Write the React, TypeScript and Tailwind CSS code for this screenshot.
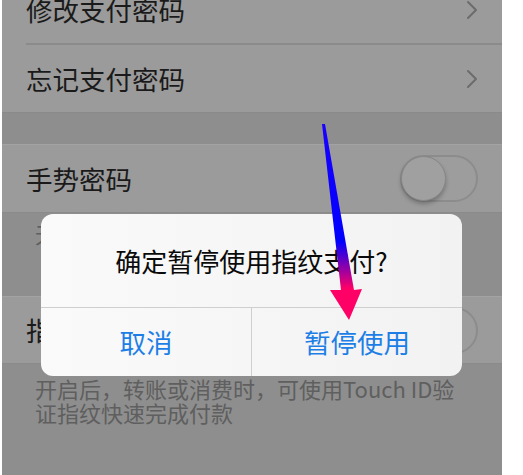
import React from "react";

function Chevron() {
  return (
    <svg width="12" height="20" viewBox="0 0 12 20" className="shrink-0">
      <path d="M2 2 L10 10 L2 18" fill="none" stroke="#6c6c6c" strokeWidth="2" strokeLinecap="round" strokeLinejoin="round" />
    </svg>
  );
}

function Toggle() {
  return (
    <div className="relative w-[78px] h-[47px] rounded-full border-2 border-[#8c8c8c] bg-[#9d9d9d] shrink-0">
      <div className="absolute left-[-1px] top-[-1px] w-[45px] h-[45px] rounded-full bg-[#a0a0a0] border border-[#878787] shadow-[0_3px_4px_rgba(0,0,0,0.25)]" />
    </div>
  );
}

export default function App() {
  return (
    <div className="relative w-[523px] h-[475px] overflow-hidden bg-white font-['Noto_Sans_CJK_SC','Noto_Sans',sans-serif]">
      <div className="ml-[2px] w-[500px] h-[475px] bg-[#8e8e8e] flex flex-col">
        {/* password group */}
        <div className="-mt-[24px] bg-[#9b9b9b] border-b border-[#8a8a8a]">
          <div className="h-[67px] pl-[24px] pr-[24px] flex items-center justify-between">
            <span className="text-[26.5px] text-[#1a1a1a]">修改支付密码</span>
            <Chevron />
          </div>
          <div className="ml-[24px] h-[2px] bg-[#8b8b8b]" />
          <div className="h-[67px] pl-[24px] pr-[24px] flex items-center justify-between">
            <span className="text-[26.5px] text-[#1a1a1a]">忘记支付密码</span>
            <Chevron />
          </div>
        </div>
        <div className="h-[32px] shrink-0 border-b border-[#a3a3a3]" />

        {/* gesture password */}
        <div className="h-[68px] shrink-0 bg-[#9b9b9b] pl-[24px] pr-[24px] flex items-center justify-between border-b border-[#8a8a8a]">
          <span className="text-[26.5px] text-[#1a1a1a]">手势密码</span>
          <Toggle />
        </div>
        <div className="h-[84px] shrink-0 pt-[6px] px-[33px] text-[22px] leading-[28px] text-[#5f5f5f] border-b border-[#a3a3a3]">
          无需输入密码即可快速登录
        </div>

        {/* fingerprint payment */}
        <div className="h-[67px] shrink-0 bg-[#9b9b9b] pl-[24px] pr-[24px] flex items-center justify-between border-b border-[#8a8a8a]">
          <span className="text-[26.5px] text-[#1a1a1a]">指纹支付</span>
          <Toggle />
        </div>
        <div className="pt-[12px] px-[33px] text-[22px] leading-[24px] text-[#5f5f5f] whitespace-nowrap">
          开启后，转账或消费时，可使用Touch ID验
          <br />
          证指纹快速完成付款
        </div>
      </div>

      {/* alert */}
      <div className="absolute left-[41px] top-[214px] w-[421px] h-[162px] rounded-[12px] overflow-hidden bg-gradient-to-r from-[#fafafa] to-[#f2f2f2] flex flex-col">
        <div className="h-[94px] flex items-center justify-center border-b border-[#cfcfcf]">
          <span className="text-[26px] text-[#0a0a0a]">确定暂停使用指纹支付?</span>
        </div>
        <div className="flex-1 flex">
          <div className="w-[211px] flex items-center justify-center border-r border-[#cfcfcf]">
            <span className="text-[26.5px] text-[#1d7fe6]">取消</span>
          </div>
          <div className="flex-1 flex items-center justify-center">
            <span className="text-[26.5px] text-[#1d7fe6]">暂停使用</span>
          </div>
        </div>
      </div>

      {/* pointer arrow */}
      <svg className="absolute left-0 top-0 pointer-events-none" width="523" height="475" viewBox="0 0 523 475">
        <defs>
          <linearGradient id="arrowFill" x1="0" y1="124" x2="0" y2="320" gradientUnits="userSpaceOnUse">
            <stop offset="0" stopColor="#1a00ff" />
            <stop offset="0.6" stopColor="#0000ff" />
            <stop offset="0.84" stopColor="#ff0066" />
            <stop offset="1" stopColor="#ff0066" />
          </linearGradient>
        </defs>
        <polygon points="322,124 325,124 354,290 362,289 349,320 330,290 341,290" fill="url(#arrowFill)" />
      </svg>
    </div>
  );
}
